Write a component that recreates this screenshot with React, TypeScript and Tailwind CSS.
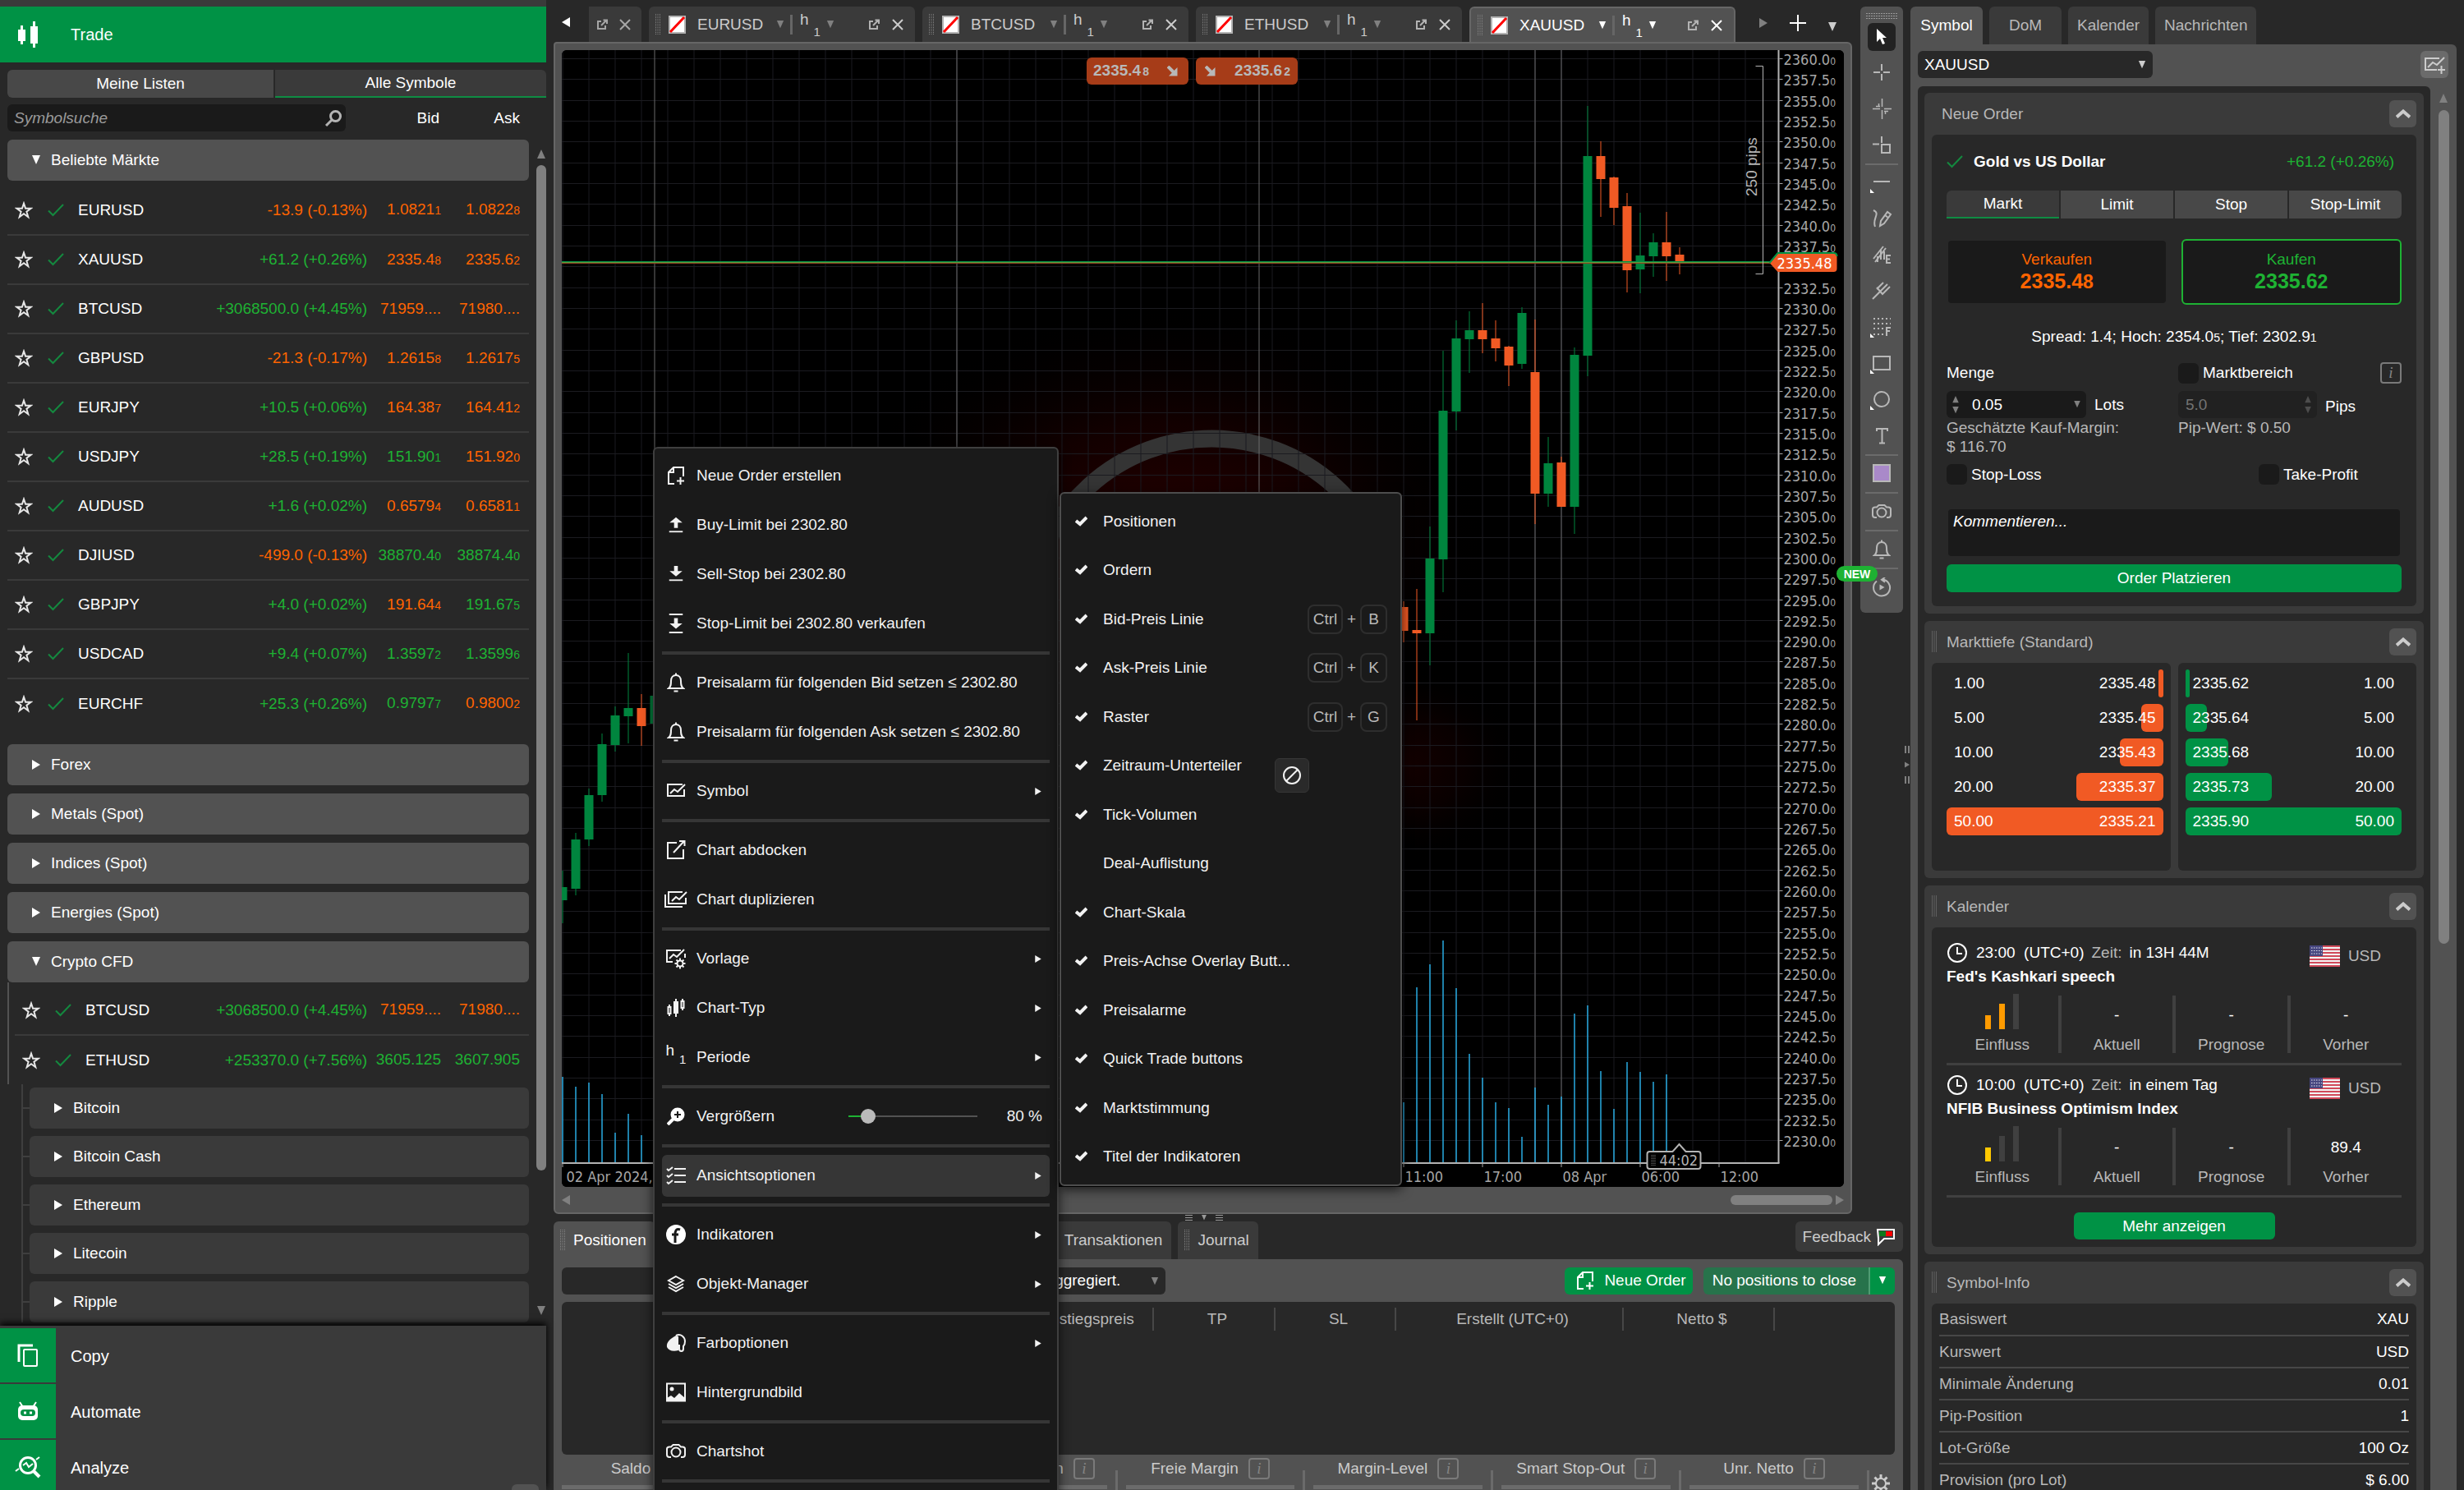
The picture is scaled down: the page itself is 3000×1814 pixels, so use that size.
import type { ReactNode } from "react";

type Tone = "up" | "down";

const toneClass = { up: "text-[#1eb233]", down: "text-[#ff6400]" };

/* ---------- small shared pieces ---------- */

interface SvgProps {
  w?: number;
  h?: number;
  box?: string;
  className?: string;
  stroke?: number;
  children: ReactNode;
}

function Svg({ w = 24, h = 24, box = "0 0 24 24", className = "", stroke = 2, children }: SvgProps) {
  return (
    <svg
      width={w}
      height={h}
      viewBox={box}
      fill="none"
      stroke="currentColor"
      strokeWidth={stroke}
      className={`shrink-0 ${className}`}
      aria-hidden="true"
    >
      {children}
    </svg>
  );
}

function Triangle({ dir, className = "" }: { dir: "up" | "down" | "left" | "right"; className?: string }) {
  const points = {
    up: "0,11 5,0 10,11",
    down: "0,0 10,0 5,11",
    left: "10,0 10,12 0,6",
    right: "0,0 10,6 0,12",
  };
  return (
    <svg width={10} height={12} viewBox="0 0 10 12" className={`shrink-0 fill-current ${className}`} aria-hidden="true">
      <polygon points={points[dir]} />
    </svg>
  );
}

function Grip({ className = "" }: { className?: string }) {
  return (
    <Svg w={6} h={26} box="0 0 6 26" stroke={1} className={`text-[#858585] ${className}`}>
      <path d="M0.5 0v26M3 0v26M5.5 0v26" strokeDasharray="1 1" />
    </Svg>
  );
}

function ThinCheck() {
  return (
    <Svg w={20} h={16} box="0 0 20 16" className="text-[#14893f]">
      <path d="M1 8.5l5.5 5.5L19 1" />
    </Svg>
  );
}

function Star() {
  return (
    <Svg w={22} h={22} box="0 0 22 22" stroke={2} className="text-[#e8e8e8]">
      <path d="M11 2.6l2.1 6.2h6.4l-5.1 3.9 1.9 6.5-5.3-3.9-5.3 3.9 1.9-6.5-5.1-3.9h6.4z" />
    </Svg>
  );
}

function DocPlus() {
  return (
    <Svg w={22} h={24} box="0 0 22 24">
      <path d="M9 22H2V8l6-6h12v11M8 2v6H2M12 18.500h9M16.500 14v9" />
    </Svg>
  );
}

function Camera() {
  return (
    <Svg w={24} h={22} box="0 0 24 22">
      <path d="M6 18H4c-2 0-3-1-3-3V8c0-1.500 1-2.500 3-2.500h2L8.500 3h7L18 5.500h2c2 0 3 1 3 2.500v7c0 2-1 3-3 3h-2" />
      <circle cx="12" cy="12" r="5.500" />
    </Svg>
  );
}

function Bell() {
  return (
    <Svg w={22} h={26} box="0 0 22 26">
      <path d="M2 20c3-2 3-5 3-9 0-4 2.500-7 6-7s6 3 6 7c0 4 0 7 3 9zM11 4V1.500M8.500 23.500h5" />
    </Svg>
  );
}

function ChartFrame() {
  return (
    <Svg w={26} h={22} box="0 0 26 22">
      <path d="M21 3H3v14h20V9M6 14l5-5 4 3 9-9" />
    </Svg>
  );
}

function Popout() {
  return (
    <Svg w={14} h={14} box="0 0 14 14">
      <path d="M6 3H2v9h9V8M6 8l6-6M8.500 1.500H13V6" />
    </Svg>
  );
}

function Cross() {
  return (
    <Svg w={14} h={14} box="0 0 14 14">
      <path d="M1 1l12 12M13 1L1 13" />
    </Svg>
  );
}

function InfoButton() {
  return (
    <button
      type="button"
      className="flex h-[26px] w-[26px] shrink-0 items-center justify-center rounded border-2 border-[#7a7a7a] font-['Liberation_Serif',serif] text-[19px] leading-[20px] text-[#858585] italic"
    >
      i
    </button>
  );
}

function Period({ className = "" }: { className?: string }) {
  return (
    <span className={`flex h-[32px] ${className}`}>
      <span className="leading-[20px]">h</span>
      <span className="ml-[6px] self-end text-[15px] leading-[14px]">1</span>
    </span>
  );
}

/* ---------- left sidebar ---------- */

interface Quote {
  name: string;
  change: string;
  tone: Tone;
  bid: [string, string, Tone];
  ask: [string, string, Tone];
}

const popular: Quote[] = [
  { name: "EURUSD", change: "-13.9 (-0.13%)", tone: "down", bid: ["1.0821", "1", "down"], ask: ["1.0822", "8", "down"] },
  { name: "XAUUSD", change: "+61.2 (+0.26%)", tone: "up", bid: ["2335.4", "8", "down"], ask: ["2335.6", "2", "down"] },
  { name: "BTCUSD", change: "+3068500.0 (+4.45%)", tone: "up", bid: ["71959....", "", "down"], ask: ["71980....", "", "down"] },
  { name: "GBPUSD", change: "-21.3 (-0.17%)", tone: "down", bid: ["1.2615", "8", "down"], ask: ["1.2617", "5", "down"] },
  { name: "EURJPY", change: "+10.5 (+0.06%)", tone: "up", bid: ["164.38", "7", "down"], ask: ["164.41", "2", "down"] },
  { name: "USDJPY", change: "+28.5 (+0.19%)", tone: "up", bid: ["151.90", "1", "up"], ask: ["151.92", "0", "down"] },
  { name: "AUDUSD", change: "+1.6 (+0.02%)", tone: "up", bid: ["0.6579", "4", "down"], ask: ["0.6581", "1", "down"] },
  { name: "DJIUSD", change: "-499.0 (-0.13%)", tone: "down", bid: ["38870.4", "0", "up"], ask: ["38874.4", "0", "up"] },
  { name: "GBPJPY", change: "+4.0 (+0.02%)", tone: "up", bid: ["191.64", "4", "down"], ask: ["191.67", "5", "up"] },
  { name: "USDCAD", change: "+9.4 (+0.07%)", tone: "up", bid: ["1.3597", "2", "up"], ask: ["1.3599", "6", "up"] },
  { name: "EURCHF", change: "+25.3 (+0.26%)", tone: "up", bid: ["0.9797", "7", "up"], ask: ["0.9800", "2", "down"] },
];

const crypto: Quote[] = [
  { name: "BTCUSD", change: "+3068500.0 (+4.45%)", tone: "up", bid: ["71959....", "", "down"], ask: ["71980....", "", "down"] },
  { name: "ETHUSD", change: "+253370.0 (+7.56%)", tone: "up", bid: ["3605.125", "", "up"], ask: ["3607.905", "", "up"] },
];

function Price({ value }: { value: [string, string, Tone] }) {
  return (
    <span className={toneClass[value[2]]}>
      {value[0]}
      <span className="text-[14px]">{value[1]}</span>
    </span>
  );
}

function QuoteTable({ quotes }: { quotes: Quote[] }) {
  return (
    <table className="w-full table-fixed border-collapse whitespace-nowrap">
      <colgroup>
        <col className="w-[190px]" />
        <col />
        <col className="w-[90px]" />
        <col className="w-[107px]" />
      </colgroup>
      <tbody>
        {quotes.map((q) => (
          <tr key={q.name} className="h-[60px] border-b-2 border-[#3a3a3a] last:border-b-0">
            <td className="p-0">
              <div className="flex items-center pl-[9px]">
                <button type="button" aria-label={`${q.name} merken`} className="mr-[18px]">
                  <Star />
                </button>
                <ThinCheck />
                <span className="ml-[17px]">{q.name}</span>
              </div>
            </td>
            <td className={`p-0 text-right ${toneClass[q.tone]}`}>{q.change}</td>
            <td className="p-0 text-right">
              <Price value={q.bid} />
            </td>
            <td className="p-0 pr-[11px] text-right">
              <Price value={q.ask} />
            </td>
          </tr>
        ))}
      </tbody>
    </table>
  );
}

function Group({ label, open = false, sub = false }: { label: string; open?: boolean; sub?: boolean }) {
  return (
    <button
      type="button"
      className={`flex h-[50px] min-w-0 items-center gap-[13px] rounded-md pl-[30px] text-left ${sub ? "flex-1 bg-[#3a3a3a]" : "w-full bg-[#525252]"}`}
    >
      <Triangle dir={open ? "down" : "right"} />
      {label}
    </button>
  );
}

function Sidebar() {
  return (
    <aside className="flex w-[665px] shrink-0 flex-col bg-[#282828]">
      <div className="h-2 shrink-0 bg-[#3a3a3a]" />
      <button type="button" className="flex h-[68px] shrink-0 items-center bg-[#009245] pl-[22px] text-xl">
        <svg width={26} height={32} viewBox="0 0 26 32" className="fill-white" aria-hidden="true">
          <path d="M0 10h9v14H0zM3 5h3v23H3zM15 6h9v21h-9zM18 0h3v32h-3z" />
        </svg>
        <span className="ml-[38px]">Trade</span>
      </button>

      <div className="mt-[9px] flex shrink-0 gap-[2px] pl-[9px]">
        <button type="button" className="h-[34px] w-[324px] rounded-l-md bg-[#484848]">
          Meine Listen
        </button>
        <button type="button" className="h-[34px] flex-1 rounded-tr-md border-b-2 border-[#0f8c43] bg-[#3a3a3a]">
          Alle Symbole
        </button>
      </div>

      <div className="mt-2 flex shrink-0 items-center pl-[9px]">
        <label className="flex h-[33px] w-[412px] items-center rounded-md bg-[#1a1a1a] pr-1 pl-2">
          <input
            type="text"
            aria-label="Symbolsuche"
            placeholder="Symbolsuche"
            className="min-w-0 flex-1 bg-transparent italic outline-none placeholder:text-[#9a9a9a]"
          />
          <Svg w={22} h={22} box="0 0 22 22" stroke={3} className="text-[#b3b3b3]">
            <circle cx="13.500" cy="8.500" r="6" />
            <path d="M9 13l-7 7" />
          </Svg>
        </label>
        <span className="w-[114px] text-right">Bid</span>
        <span className="w-[98px] text-right">Ask</span>
      </div>

      <div className="mt-[10px] flex min-h-0 flex-1 gap-[9px] overflow-hidden pl-[9px]">
        <div className="min-w-0 flex-1">
          <Group label="Beliebte Märkte" open />
          <div className="mt-[6px]">
            <QuoteTable quotes={popular} />
          </div>
          <div className="mt-5 flex flex-col gap-[10px]">
            <Group label="Forex" />
            <Group label="Metals (Spot)" />
            <Group label="Indices (Spot)" />
            <Group label="Energies (Spot)" />
            <Group label="Crypto CFD" open />
          </div>
          <div className="border-l-2 border-[#525252] pt-[4px] pl-[7px]">
            <QuoteTable quotes={crypto} />
          </div>
          <div className="ml-[17px] flex flex-col gap-[9px] border-l-2 border-[#3f3f3f] pt-[4px]">
            {["Bitcoin", "Bitcoin Cash", "Ethereum", "Litecoin", "Ripple"].map((name) => (
              <div key={name} className="flex items-center">
                <div className="h-[2px] w-2 shrink-0 bg-[#3f3f3f]" />
                <Group label={name} sub />
              </div>
            ))}
          </div>
        </div>
        <div className="flex w-3 flex-col items-center pt-3 pb-3 text-[#808080]">
          <Triangle dir="up" />
          <div className="mt-[7px] h-[1224px] w-3 rounded-full bg-[#808080]" />
          <Triangle dir="down" className="mt-auto" />
        </div>
      </div>

      <nav className="relative h-[200px] shrink-0 overflow-hidden bg-[#3a3a3a] pt-[3px] text-xl shadow-[0_-3px_8px_#000]">
        <SideLink label="Copy">
          <Svg w={26} h={28} box="0 0 26 28" stroke={3}>
            <path d="M19 2H2v20" />
            <rect x="8" y="7" width="16" height="20" rx="1" strokeWidth={2} />
          </Svg>
        </SideLink>
        <SideLink label="Automate">
          <svg width={26} height={24} viewBox="0 0 26 24" aria-hidden="true">
            <path d="M3 1l4 6M23 1l-4 6" stroke="#fff" strokeWidth={2} />
            <rect x="1" y="5" width="24" height="18" rx="5" fill="#fff" />
            <rect x="4" y="10" width="18" height="8" rx="4" fill="#009245" />
            <path d="M8 12.500h3v3H8zM15 12.500h3v3h-3z" fill="#fff" />
          </svg>
        </SideLink>
        <SideLink label="Analyze">
          <Svg w={32} h={28} box="0 0 32 28" stroke={3}>
            <circle cx="16" cy="12" r="9.500" />
            <path d="M22 18l8 8" strokeWidth={4} />
            <path d="M1 19l4-3M10 12l4-3 3 5 5-4M26 5l4-3" strokeWidth={2} />
          </Svg>
        </SideLink>
        <div className="absolute right-[9px] bottom-0 h-[7px] w-[33px] rounded-t-md bg-[#525252]" />
      </nav>
    </aside>
  );
}

function SideLink({ label, children }: { label: string; children: ReactNode }) {
  return (
    <a href="#" className="mb-[2px] flex h-[66px] items-center">
      <span className="flex h-full w-[68px] items-center justify-center bg-[#009245]">{children}</span>
      <span className="ml-[18px] pt-[2px]">{label}</span>
    </a>
  );
}

/* ---------- chart ---------- */

// [slot, high, open/close top, open/close bottom, low, tone]
const candles: [number, number, number, number, number, Tone][] = [
  [0, 1060, 1080, 1096, 1124, "up"],
  [1, 1014, 1022, 1082, 1090, "up"],
  [2, 960, 968, 1022, 1030, "up"],
  [3, 893, 906, 968, 976, "up"],
  [4, 860, 871, 907, 915, "up"],
  [5, 795, 862, 872, 905, "up"],
  [6, 845, 862, 884, 908, "down"],
  [7, 840, 847, 881, 890, "up"],
  [64, 732, 739, 768, 782, "down"],
  [65, 717, 767, 771, 877, "down"],
  [66, 641, 680, 771, 810, "up"],
  [67, 427, 500, 681, 721, "up"],
  [68, 390, 412, 501, 524, "up"],
  [69, 379, 402, 413, 454, "up"],
  [70, 369, 402, 413, 430, "down"],
  [71, 390, 412, 424, 440, "down"],
  [72, 421, 422, 445, 470, "down"],
  [73, 374, 381, 443, 449, "up"],
  [74, 389, 453, 601, 638, "down"],
  [75, 532, 564, 601, 617, "up"],
  [76, 556, 563, 617, 617, "down"],
  [77, 423, 432, 617, 650, "up"],
  [78, 129, 190, 433, 458, "up"],
  [79, 172, 190, 218, 264, "down"],
  [80, 215, 216, 253, 274, "down"],
  [81, 235, 251, 329, 356, "down"],
  [82, 259, 311, 328, 357, "up"],
  [83, 284, 295, 312, 337, "up"],
  [84, 258, 295, 312, 342, "down"],
  [85, 301, 310, 319, 334, "down"],
];

// [slot, top of the volume bar]
const volumes: [number, number][] = [
  [0, 1311], [1, 1323], [2, 1318], [3, 1332], [4, 1379], [5, 1356], [6, 1382],
  [64, 1342], [65, 1202], [66, 1174], [67, 1145], [68, 1203], [69, 1283], [70, 1312],
  [71, 1342], [72, 1349], [73, 1384], [74, 1324], [75, 1345], [76, 1335], [77, 1234],
  [78, 1224], [79, 1304], [80, 1350], [81, 1293], [82, 1305], [83, 1317], [84, 1308],
];

const timeLabels: [number, string][] = [
  [0, "02 Apr 2024,"],
  [64, "11:00"],
  [70, "17:00"],
  [76, "08 Apr"],
  [82, "06:00"],
  [88, "12:00"],
];

const slotX = (slot: number) => 686 + slot * 16;
const baseline = 1416;
const prices = Array.from({ length: 53 }, (_, i) => ({
  y: Math.round(71 + (i * 1317) / 52),
  label: (2360 - i * 2.5).toFixed(1),
}));
// the level behind the current price tag gets no label of its own
const priceLabels = prices.filter((p) => p.label !== "2335.0");

function PriceChart() {
  return (
    <svg
      viewBox="685 61 1562 1384"
      preserveAspectRatio="xMidYMid slice"
      className="h-full w-full font-['DejaVu_Sans_Condensed','Noto_Sans',sans-serif] text-[18px]"
      role="img"
      aria-label="XAUUSD h1"
    >
      <defs>
        <radialGradient id="glow">
          <stop offset="0" stopColor="#260000" />
          <stop offset="0.5" stopColor="#120000" />
          <stop offset="1" stopColor="#000" stopOpacity="0" />
        </radialGradient>
      </defs>
      <rect x="685" y="61" width="1562" height="1384" fill="#000" />
      <ellipse cx="1420" cy="660" rx="400" ry="290" fill="url(#glow)" />
      <ellipse cx="1710" cy="930" rx="150" ry="120" fill="url(#glow)" opacity="0.500" />
      <path d="M1256 735a222 222 0 0 1 442 0" fill="none" stroke="#343434" strokeWidth="21" />

      <g stroke="#1b1b20">
        {Array.from({ length: 46 }, (_, i) => (
          <path key={i} d={`M${slotX(i * 2) + 0.5} 61V${baseline}`} />
        ))}
        {prices.map((p) => (
          <path key={p.label} d={`M685 ${p.y + 0.5}H2167`} />
        ))}
      </g>
      <g stroke="#6b6b6b">
        {[7, 30, 53, 74, 76].map((slot) => (
          <path key={slot} d={`M${slotX(slot) + 0.5} 61V${baseline}`} />
        ))}
      </g>

      {volumes.map(([slot, top]) => (
        <path key={slot} d={`M${slotX(slot) + 0.5} ${top}V${baseline}`} stroke="#29abe2" strokeWidth="1.500" />
      ))}
      {candles.map(([slot, high, top, bottom, low, tone]) => {
        const color = tone === "up" ? "#00853e" : "#f15a24";
        return (
          <g key={slot} fill={color}>
            <rect x={slotX(slot)} y={high} width="1" height={low - high} />
            <rect x={slotX(slot) - 5} y={top} width="11" height={bottom - top} />
          </g>
        );
      })}

      <path d="M685 318.500H2160" stroke="#009245" />
      <path d="M685 319.500H2160" stroke="#5c9a3c" />
      <path d="M685 320.500H2160" stroke="#8f4220" />

      <path d="M2139 80.500h9v253h-9" fill="none" stroke="#b3b3b3" />
      <text
        transform="translate(2140 239) rotate(-90)"
        className="fill-[#b3b3b3] font-['Liberation_Sans',Arial,sans-serif] text-[19px]"
      >
        250 pips
      </text>

      <path d={`M2167 61V${baseline}`} stroke="#b3b3b3" strokeWidth="2" />
      <path d={`M685 ${baseline}H2168`} stroke="#b3b3b3" strokeWidth="2" />
      <g fill="#a6a6a6">
        {priceLabels.map((p) => (
          <text key={p.label} x="2173" y={p.y + 8}>
            {p.label}
            <tspan className="text-[12px]">0</tspan>
          </text>
        ))}
        {prices.map((p) => (
          <rect key={p.label} x="2168" y={p.y} width="4" height="1" />
        ))}
        {timeLabels.map(([slot, label]) => (
          <g key={label}>
            <rect x={slotX(slot)} y={baseline} width="1" height="5" />
            <text x={slotX(slot) + (slot ? 2 : 5)} y="1439">
              {label}
            </text>
          </g>
        ))}
      </g>

      <path d="M2156 320l10-12h68q4 0 4 4v15q0 4-4 4h-68z" fill="#f15a24" />
      <path d="M2156 320l10-12h68q4 0 4 4" fill="none" stroke="#009245" strokeWidth="2" />
      <text x="2165" y="327" fill="#fff">
        2335.48
      </text>

      <path
        d="M2010 1402h28l8-9 8 9h15q3 0 3 3v15q0 3-3 3h-59q-3 0-3-3v-15q0-3 3-3z"
        fill="#000"
        stroke="#b3b3b3"
        strokeWidth="2"
      />
      <path d="M2012.500 1406v14M2014.500 1406v14M2016.500 1406v14" stroke="#808080" strokeDasharray="1 1" />
      <text x="2022" y="1419" fill="#b3b3b3">
        44:02
      </text>
    </svg>
  );
}

function ChartTab({ symbol, active = false }: { symbol: string; active?: boolean }) {
  return (
    <div
      className={`flex h-full w-[324px] shrink-0 items-center rounded-t-md pr-[14px] pl-2 ${
        active ? "border-x-2 border-t-2 border-[#666] bg-[#525252] text-white" : "bg-[#3a3a3a] text-[#ccc]"
      }`}
    >
      <Grip />
      <svg width={21} height={22} viewBox="0 0 21 22" className="ml-[10px]" aria-hidden="true">
        <rect x="1" y="1" width="19" height="20" fill="#fff" stroke="#b3b3b3" strokeWidth={2} />
        <path d="M2 20L19 2" stroke="#f00" strokeWidth={3} />
      </svg>
      <button type="button" className="ml-[14px] flex items-center">
        <span className="w-[96px] text-left">{symbol}</span>
        <Triangle dir="down" className={active ? "h-[10px]" : "h-[10px] text-[#808080]"} />
      </button>
      <div className="mr-[9px] ml-[7px] h-[24px] w-[3px] bg-[#666]" />
      <button type="button" className="flex items-center">
        <Period className="w-[32px]" />
        <Triangle dir="down" className={active ? "h-[10px]" : "h-[10px] text-[#808080]"} />
      </button>
      <button type="button" aria-label="Abdocken" className="mr-[15px] ml-auto text-[#b3b3b3]">
        <Popout />
      </button>
      <button type="button" aria-label="Schließen">
        <Cross />
      </button>
    </div>
  );
}

function QuickButton({ side, value, digit }: { side: "sell" | "buy"; value: string; digit: string }) {
  return (
    <button
      type="button"
      className={`flex h-[33px] w-[124px] items-center justify-between rounded-md bg-[#a63c18] font-bold text-[#b8b8b8] ${
        side === "buy" ? "flex-row-reverse pr-[9px] pl-[11px]" : "pr-[13px] pl-2"
      }`}
    >
      <span>
        {value}
        <span className="ml-[2px] text-[14px]">{digit}</span>
      </span>
      <Svg w={13} h={13} box="0 0 13 13" stroke={4}>
        <path d="M1 1l8 8" />
        <path d="M12.500 2v10.500H2z" fill="currentColor" stroke="none" />
      </Svg>
    </button>
  );
}

function ChartArea() {
  return (
    <div className="flex min-w-0 flex-1 flex-col pt-2">
      <div className="flex h-[43px] shrink-0 gap-[9px] pl-[10px]">
        <div className="flex w-[97px] shrink-0 items-stretch justify-between">
          <button type="button" aria-label="Zurück">
            <Triangle dir="left" className="mb-[6px]" />
          </button>
          <div className="flex w-[64px] items-center justify-end gap-[14px] rounded-tr-md bg-[#3a3a3a] pr-[13px] text-[#a6a6a6]">
            <Popout />
            <Cross />
          </div>
        </div>
        <ChartTab symbol="EURUSD" />
        <ChartTab symbol="BTCUSD" />
        <ChartTab symbol="ETHUSD" />
        <ChartTab symbol="XAUUSD" active />
        <div className="ml-[20px] flex shrink-0 items-center gap-[27px] pb-1">
          <Triangle dir="right" className="text-[#808080]" />
          <Svg w={20} h={20} box="0 0 20 20">
            <path d="M10 0v20M0 10h20" />
          </Svg>
          <Triangle dir="down" className="mt-[10px] text-[#ccc]" />
        </div>
      </div>
      <div className="flex min-h-0 flex-1 flex-col rounded-md rounded-tl-sm border-2 border-[#666] bg-[#525252] px-2 pt-2">
        <div className="relative min-h-0 flex-1 overflow-hidden rounded-md bg-black">
          <PriceChart />
          <div className="absolute inset-x-0 top-[9px] flex justify-center gap-[9px] pr-[26px]">
            <QuickButton side="sell" value="2335.4" digit="8" />
            <QuickButton side="buy" value="2335.6" digit="2" />
          </div>
        </div>
        <div className="flex h-[31px] shrink-0 items-center text-[#808080]">
          <Triangle dir="left" />
          <div className="mr-1 ml-auto h-3 w-[124px] rounded-full bg-[#808080]" />
          <Triangle dir="right" />
        </div>
      </div>
    </div>
  );
}

/* ---------- drawing toolbar ---------- */

function Corner() {
  return <path d="M0 21l5 5H0z" fill="#fff" stroke="none" />;
}

const tools: { name: string; icon: ReactNode; line?: boolean }[] = [
  { name: "Fadenkreuz", icon: <path d="M14 3v8M14 15v8M4 13h8M16 13h8" /> },
  {
    name: "Magnet",
    icon: <path d="M14.500 1v10M14.500 15v11M3 13.500h9M17 13.500h9M10.500 7v4M18.500 16v4M7 10.500h5M17 16.500h5" strokeWidth={1.5} />,
  },
  { name: "Messen", icon: <path d="M14 3v8M3 12.500h8M14 13h10v10H14z" />, line: true },
  { name: "Linie", icon: <><path d="M4 12h20" /><Corner /></> },
  { name: "Freihand", icon: <path d="M4 3c9 4-2 10 2 20M12 22l1-6 8-11 4 3-8 11zM18 9l4 3" /> },
  { name: "Elliott", icon: <><path d="M4 18L16 3M6 22l13-17M13 7v12M17 9v10M9 15v7" /><path d="M20 14h5M20 18.500h4M20 23h5M20 13v11" /></> },
  { name: "Gabel", icon: <path d="M3 23l9-9M8 9l7 8 9-9M8 11l8-8M12 14l9-9" /> },
  {
    name: "Fibonacci",
    icon: (
      <>
        <path d="M4 3h21M4 9h21M4 15h12M4 22h12" strokeDasharray="2 3" />
        <path d="M20 24V14h5M20 18h4" />
        <Corner />
      </>
    ),
  },
  { name: "Rechteck", icon: <><rect x="4" y="5" width="20" height="16" /><Corner /></> },
  { name: "Ellipse", icon: <><circle cx="14" cy="13" r="9" /><Corner /></> },
  { name: "Text", icon: <path d="M8 8V5h13v3M14.500 5v18M11 22.500h7" />, line: true },
  { name: "Farbe", icon: <rect x="4" y="3" width="20" height="20" fill="#a989c9" />, line: true },
];

function ToolBar() {
  return (
    <div className="mt-2 flex w-[52px] shrink-0 flex-col items-center self-start rounded-md bg-[#525252] pb-[9px] text-[#b8b8b8]">
      <Svg w={39} h={15} box="0 0 39 15" stroke={1} className="text-[#999]">
        <path d="M0 8.500h39M0 11.500h39M0 14.500h39" strokeDasharray="2 1" />
      </Svg>
      <button type="button" aria-label="Zeiger" className="my-[5px] flex h-[34px] w-[34px] items-center justify-center rounded-md bg-[#222]">
        <svg width={14} height={20} viewBox="0 0 14 20" className="fill-white" aria-hidden="true">
          <path d="M1 0v16l4-4 3 7 3-1-3-7h5z" />
        </svg>
      </button>
      {tools.map((tool) => (
        <div key={tool.name} className={`flex w-[40px] justify-center ${tool.line ? "border-b-2 border-[#6b6b6b]" : ""}`}>
          <button type="button" aria-label={tool.name} className="flex h-[44px] items-center">
            <Svg w={28} h={28} box="0 0 28 28">
              {tool.icon}
            </Svg>
          </button>
        </div>
      ))}
      <button type="button" aria-label="Chartshot" className="flex h-[46px] w-[40px] items-center justify-center border-b-2 border-[#6b6b6b]">
        <Camera />
      </button>
      <button type="button" aria-label="Alarm" className="flex h-[46px] w-[40px] items-center justify-center border-b-2 border-[#6b6b6b]">
        <Bell />
      </button>
      <button type="button" aria-label="Replay" className="relative flex h-[44px] w-full items-center justify-center">
        <Svg w={24} h={24} box="0 0 24 24">
          <path d="M6 4.500A10 10 0 1 0 13 2.500M16 0l-4 2.700 4 3" />
          <path d="M9.500 8.500v7l6-3.500z" fill="currentColor" stroke="none" />
        </Svg>
        <span className="absolute -top-1 -left-[29px] flex h-[19px] w-[50px] items-center justify-center rounded-full bg-[#1eb233] text-[14px] leading-none font-bold text-white">
          NEW
        </span>
      </button>
    </div>
  );
}

/* ---------- positions ---------- */

const accountStats = ["Saldo", "", "Benutzte Margin", "Freie Margin", "Margin-Level", "Smart Stop-Out", "Unr. Netto"];

function PanelTab({ label, active = false }: { label: string; active?: boolean }) {
  return (
    <button
      type="button"
      className={`flex h-full items-center gap-[10px] rounded-t-md pr-[11px] pl-2 ${active ? "bg-[#525252] text-white" : "bg-[#3a3a3a] text-[#ccc]"}`}
    >
      <Grip />
      {label}
    </button>
  );
}

function Positions() {
  const head = "p-0 font-normal";
  const cell = "flex h-7 items-center justify-center border-r-2 border-[#474747] pl-2";
  return (
    <section className="shrink-0">
      <div className="flex h-[9px] items-center justify-center gap-[9px] pr-[60px] text-[#999]">
        <Svg w={9} h={7} box="0 0 9 7" stroke={1}>
          <path d="M0 .5h9M0 3.500h9M0 6.500h9" />
        </Svg>
        <Triangle dir="down" className="h-[7px]" />
        <Svg w={9} h={7} box="0 0 9 7" stroke={1}>
          <path d="M0 .5h9M0 3.500h9M0 6.500h9" />
        </Svg>
      </div>
      <div className="flex h-[46px] gap-2">
        <PanelTab label="Positionen" active />
        <div className="w-[458px]" />
        <PanelTab label="Transaktionen" />
        <PanelTab label="Journal" />
        <a href="#" className="ml-auto flex h-[37px] items-center gap-[6px] rounded-md bg-[#3a3a3a] px-[9px] text-[#ccc]">
          Feedback
          <svg width={24} height={22} viewBox="0 0 24 22" aria-hidden="true">
            <path d="M2 2h20v11H10l-7 7V13z" fill="#3a3a3a" stroke="#fff" strokeWidth={2} />
            <path d="M4 4h8v6H4z" fill="#0f7a1c" />
            <path d="M12 4h8v6h-8z" fill="#f00" />
          </svg>
        </a>
      </div>
      <div className="rounded-tr-md bg-[#525252] px-[10px]">
        <div className="flex h-[52px] items-center">
          <div className="relative w-[735px]">
            <select aria-label="Ansicht" className="h-[33px] w-full appearance-none rounded-md bg-[#282828] pl-[541px]">
              <option>Nicht aggregiert.</option>
            </select>
            <Triangle dir="down" className="pointer-events-none absolute top-[12px] right-2 h-[10px] text-[#808080]" />
          </div>
          <button type="button" className="ml-auto flex h-[33px] items-center gap-3 rounded-md bg-[#009245] pr-2 pl-[14px]">
            <DocPlus />
            Neue Order
          </button>
          <button type="button" className="ml-[13px] h-[33px] rounded-l-md bg-[#27734b] pr-[15px] pl-[11px]">
            No positions to close
          </button>
          <button type="button" aria-label="Optionen" className="flex h-[33px] w-[32px] items-center justify-center rounded-r-md border-l-2 border-[#4f9c72] bg-[#009245]">
            <Triangle dir="down" className="h-[10px]" />
          </button>
        </div>
        <div className="h-[186px] rounded-md bg-[#282828] pt-[7px] text-[#b8b8b8]">
          <table className="w-full table-fixed border-collapse">
            <colgroup>
              <col />
              <col className="w-[173px]" />
              <col className="w-[148px]" />
              <col className="w-[147px]" />
              <col className="w-[277px]" />
              <col className="w-[184px]" />
              <col className="w-[146px]" />
            </colgroup>
            <thead>
              <tr>
                <td />
                {["Einstiegspreis", "TP", "SL", "Erstellt (UTC+0)", "Netto $"].map((title) => (
                  <th key={title} scope="col" className={head}>
                    <div className={cell}>{title}</div>
                  </th>
                ))}
                <td />
              </tr>
            </thead>
          </table>
        </div>
      </div>
      <div className="flex h-[43px] overflow-hidden bg-[#525252] text-[#ccc]">
        {accountStats.map((label) => (
          <div key={label} className="flex flex-1">
            <div className="flex flex-1 flex-col items-center px-[10px] pt-1">
              <div className="flex items-center gap-3">
                {label}
                <InfoButton />
              </div>
              <div className="mt-[7px] h-[5px] w-full bg-[#6b6b6b]" />
            </div>
            <div className="h-[24px] w-[3px] self-end bg-[#6b6b6b]" />
          </div>
        ))}
        <button type="button" aria-label="Einstellungen" className="flex w-[41px] justify-center self-start pt-[24px] pr-[13px]">
          <Svg w={22} h={22} box="0 0 22 22">
            <circle cx="11" cy="11" r="6" />
            <path d="M11 0v5M11 17v5M0 11h5M17 11h5M3.500 3.500l3 3M15.500 15.500l3 3M3.500 18.500l3-3M15.500 6.500l3-3" strokeWidth={3} />
          </Svg>
        </button>
      </div>
    </section>
  );
}

/* ---------- right panel ---------- */

interface CardProps {
  title: string;
  grip?: boolean;
  children: ReactNode;
}

function Card({ title, grip = true, children }: CardProps) {
  return (
    <section className="shrink-0 rounded-md bg-[#3a3a3a] p-[9px]">
      <header className="mb-[9px] flex h-[33px] items-center">
        {grip && <Grip className="h-[33px]" />}
        <h2 className="ml-3 text-[#b8b8b8]">{title}</h2>
        <button type="button" aria-label={`${title} einklappen`} className="ml-auto flex h-[33px] w-[33px] items-center justify-center rounded-md bg-[#525252] text-[#ccc]">
          <Svg w={18} h={11} box="0 0 18 11" stroke={4}>
            <path d="M1 9.500l8-7 8 7" />
          </Svg>
        </button>
      </header>
      {children}
    </section>
  );
}

const checkBox = "h-[25px] w-[25px] appearance-none rounded-md bg-[#1a1a1a] checked:bg-[#009245]";

function Spinner() {
  return (
    <div className="flex flex-col gap-1">
      <Triangle dir="up" className="h-[9px]" />
      <Triangle dir="down" className="h-[9px]" />
    </div>
  );
}

function OrderCard() {
  const tab = "h-[34px] flex-1 bg-[#484848]";
  return (
    <Card title="Neue Order" grip={false}>
      <form className="rounded-md bg-[#282828] px-[18px] pt-[22px] pb-[17px]">
        <div className="flex h-[22px] items-center pr-[9px]">
          <ThinCheck />
          <span className="ml-[13px] font-bold">Gold vs US Dollar</span>
          <span className="ml-auto text-[#1eb233]">+61.2 (+0.26%)</span>
        </div>
        <div className="mt-6 flex gap-[2px]">
          <button type="button" className="h-[34px] flex-1 rounded-tl-md border-b-2 border-[#0f8c43] bg-[#3a3a3a]">
            Markt
          </button>
          <button type="button" className={tab}>Limit</button>
          <button type="button" className={tab}>Stop</button>
          <button type="button" className={`${tab} rounded-r-md`}>Stop-Limit</button>
        </div>
        <div className="mt-[25px] flex gap-[17px]">
          <button type="button" className="h-[80px] flex-1 rounded-md border-2 border-transparent bg-[#1a1a1a] bg-clip-padding text-[#ff6400]">
            <span className="block">Verkaufen</span>
            <span className="block text-[25px] leading-[30px] font-bold">
              2335.4<span className="text-[23px]">8</span>
            </span>
          </button>
          <button type="button" className="h-[80px] flex-1 rounded-md border-2 border-[#1eb233] bg-[#1a1a1a] text-[#1eb233]">
            <span className="block">Kaufen</span>
            <span className="block text-[25px] leading-[30px] font-bold">
              2335.6<span className="text-[23px]">2</span>
            </span>
          </button>
        </div>
        <p className="mt-7 h-[22px] text-center">
          Spread: 1.4; Hoch: 2354.0<span className="text-[14px]">5</span>; Tief: 2302.9
          <span className="text-[14px]">1</span>
        </p>

        <div className="mt-5 grid grid-cols-[282px_1fr]">
          <label htmlFor="volume" className="leading-[26px]">
            Menge
          </label>
          <div className="flex h-[26px] items-center">
            <label className="flex items-center gap-[5px]">
              <input type="checkbox" className={checkBox} />
              Marktbereich
            </label>
            <div className="ml-auto flex">
              <InfoButton />
            </div>
          </div>

          <div className="mt-[9px] flex items-center">
            <div className="flex h-[33px] w-[170px] items-center rounded-md bg-[#1a1a1a] px-[6px] text-[#808080]">
              <Spinner />
              <input id="volume" type="text" defaultValue="0.05" className="ml-[15px] min-w-0 flex-1 bg-transparent text-white outline-none" />
              <Triangle dir="down" className="h-[9px]" />
            </div>
            <span className="ml-[10px]">Lots</span>
          </div>
          <div className="mt-[9px] flex items-center">
            <div className="flex h-[33px] w-[169px] items-center rounded-md bg-[#212121] px-[6px] text-[#4d4d4d]">
              <input aria-label="Marktbereich in Pips" type="text" disabled defaultValue="5.0" className="ml-[3px] min-w-0 flex-1 bg-transparent text-[#737373]" />
              <Spinner />
            </div>
            <span className="ml-[10px] pt-[5px]">Pips</span>
          </div>

          <p className="w-[215px] leading-[23px] text-[#b8b8b8]">Geschätzte Kauf-Margin: $ 116.70</p>
          <p className="leading-[23px] text-[#b8b8b8]">Pip-Wert: $ 0.50</p>

          <label className="mt-[10px] flex items-center gap-[5px]">
            <input type="checkbox" className={checkBox} />
            Stop-Loss
          </label>
          <label className="mt-[10px] flex items-center gap-[5px] pl-[98px]">
            <input type="checkbox" className={checkBox} />
            Take-Profit
          </label>
        </div>

        <div className="mt-[30px] flex px-[2px]">
          <textarea
            aria-label="Kommentar"
            placeholder="Kommentieren..."
            className="h-[57px] w-full resize-none rounded-sm bg-[#1a1a1a] px-[6px] py-1 italic outline-none placeholder:text-white"
          />
        </div>
        <button type="submit" className="mt-[10px] block h-[34px] w-full rounded-md bg-[#009245]">
          Order Platzieren
        </button>
      </form>
    </Card>
  );
}

const depth = [
  { volume: "1.00", bid: "2335.48", ask: "2335.62", share: 2 },
  { volume: "5.00", bid: "2335.45", ask: "2335.64", share: 10 },
  { volume: "10.00", bid: "2335.43", ask: "2335.68", share: 20 },
  { volume: "20.00", bid: "2335.37", ask: "2335.73", share: 40 },
  { volume: "50.00", bid: "2335.21", ask: "2335.90", share: 100 },
];

function DepthTable({ side }: { side: "bid" | "ask" }) {
  const isBid = side === "bid";
  return (
    <div className={`h-[253px] flex-1 rounded-md bg-[#282828] pt-1 ${isBid ? "pr-[9px] pl-[18px]" : "pr-[18px] pl-[9px]"}`}>
      <table className="w-full border-collapse">
        <tbody>
          {depth.map((row) => (
            <tr key={row.volume} className="relative h-[42px]">
              <td className="p-0 pl-[9px]">
                <span
                  className={`absolute inset-y-1 rounded-md ${isBid ? "right-0 bg-[#f15a24]" : "left-0 bg-[#009245]"}`}
                  style={{ width: `${row.share}%` }}
                />
                <span className="relative">{isBid ? row.volume : row.ask}</span>
              </td>
              <td className="p-0 pr-[9px] text-right">
                <span className="relative">{isBid ? row.bid : row.volume}</span>
              </td>
            </tr>
          ))}
        </tbody>
      </table>
    </div>
  );
}

function Flag() {
  return (
    <svg width={37} height={26} viewBox="0 0 37 26" aria-hidden="true">
      <rect width="37" height="26" fill="#f2f2f2" />
      <path d="M0 1h37M0 5h37M0 9h37M0 13h37M0 17h37M0 21h37M0 25h37" stroke="#d14a5a" strokeWidth={2} />
      <rect width="16" height="13" fill="#46467f" />
      <path d="M2 3h13M2 6.500h13M2 10h13" stroke="#e6e6f0" strokeDasharray="1.500 1.500" />
    </svg>
  );
}

interface CalendarEvent {
  time: string;
  due: string;
  title: string;
  bars: string[];
  values: string[];
}

const events: CalendarEvent[] = [
  {
    time: "23:00",
    due: "in 13H 44M",
    title: "Fed's Kashkari speech",
    bars: ["bg-[#ff9b00]", "bg-[#ff9b00]", "bg-[#404040]"],
    values: ["-", "-", "-"],
  },
  {
    time: "10:00",
    due: "in einem Tag",
    title: "NFIB Business Optimism Index",
    bars: ["bg-[#ffc800]", "bg-[#404040]", "bg-[#404040]"],
    values: ["-", "-", "89.4"],
  },
];

function EventRow({ event, first }: { event: CalendarEvent; first: boolean }) {
  const heights = ["h-[17px]", "h-[31px]", "h-[43px]"];
  return (
    <article className={`border-b-[3px] border-[#404040] ${first ? "pt-[19px]" : "pt-3"}`}>
      <div className="flex h-6 items-center whitespace-pre">
        <Svg w={26} h={26} box="0 0 26 26">
          <circle cx="13" cy="13" r="11" />
          <path d="M13 6v8h6" />
        </Svg>
        <span className="ml-[10px]">{`${event.time}  (UTC+0)`}</span>
        <span className="ml-[9px] text-[#b8b8b8]">Zeit:</span>
        <span className="ml-[9px]">{event.due}</span>
        <span className="mt-2 mr-[25px] ml-auto flex items-center gap-[10px] text-[#b8b8b8]">
          <Flag />
          USD
        </span>
      </div>
      <h3 className="mt-[6px] font-bold">{event.title}</h3>
      <div className="mt-3 mb-3 flex h-[70px] divide-x-4 divide-[#404040] text-center">
        <div className="flex flex-1 flex-col items-center">
          <div className="flex h-[41px] items-end gap-[10px]">
            {event.bars.map((color, i) => (
              <div key={i} className={`w-[7px] ${heights[i]} ${color}`} />
            ))}
          </div>
          <div className="mt-2 text-[#b8b8b8]">Einfluss</div>
        </div>
        {["Aktuell", "Prognose", "Vorher"].map((label, i) => (
          <div key={label} className="flex-1">
            <div className="h-[41px] pt-[13px]">{event.values[i]}</div>
            <div className="mt-2 text-[#b8b8b8]">{label}</div>
          </div>
        ))}
      </div>
    </article>
  );
}

const symbolInfo = [
  ["Basiswert", "XAU"],
  ["Kurswert", "USD"],
  ["Minimale Änderung", "0.01"],
  ["Pip-Position", "1"],
  ["Lot-Größe", "100 Oz"],
  ["Provision (pro Lot)", "$ 6.00"],
];

function RightPanel() {
  const tab = "h-full min-w-[88px] rounded-t-md bg-[#3a3a3a] px-[11px] text-[#b8b8b8]";
  return (
    <aside className="mr-[9px] flex w-[665px] shrink-0 flex-col pt-2">
      <div className="flex h-[46px] shrink-0 gap-2">
        <button type="button" className="h-full min-w-[88px] rounded-t-md bg-[#525252]">
          Symbol
        </button>
        <button type="button" className={tab}>DoM</button>
        <button type="button" className={tab}>Kalender</button>
        <button type="button" className={tab}>Nachrichten</button>
      </div>
      <div className="flex min-h-0 flex-1 flex-col rounded-tr-md bg-[#525252] pl-[9px]">
        <div className="flex h-[51px] shrink-0 items-start justify-between pt-2 pr-[10px]">
          <div className="relative w-[286px]">
            <select aria-label="Symbol" className="h-[33px] w-full appearance-none rounded-md bg-[#282828] px-2">
              <option>XAUUSD</option>
            </select>
            <Triangle dir="down" className="pointer-events-none absolute top-[12px] right-2 h-[10px] text-[#ccc]" />
          </div>
          <button type="button" aria-label="Neuer Chart" className="flex h-[33px] w-[34px] items-center justify-center rounded-md bg-[#6b6b6b] text-[#ccc]">
            <Svg w={28} h={24} box="0 0 28 24">
              <path d="M20 4H3v14h14M6 15l6-6 5 3 9-9M18 18h9M22.500 13v10" />
            </Svg>
          </button>
        </div>
        <div className="flex min-h-0 flex-1 overflow-hidden">
          <div className="flex min-w-0 flex-1 flex-col gap-[9px] rounded-t-md bg-[#282828] p-2">
            <OrderCard />
            <Card title="Markttiefe (Standard)">
              <div className="flex gap-[9px]">
                <DepthTable side="bid" />
                <DepthTable side="ask" />
              </div>
            </Card>
            <Card title="Kalender">
              <div className="rounded-md bg-[#282828] px-[18px] pb-[9px]">
                {events.map((event, i) => (
                  <EventRow key={event.title} event={event} first={i === 0} />
                ))}
                <div className="mt-[18px] flex justify-center">
                  <button type="button" className="h-[33px] w-[245px] rounded-md bg-[#009245]">
                    Mehr anzeigen
                  </button>
                </div>
              </div>
            </Card>
            <Card title="Symbol-Info">
              <div className="rounded-md bg-[#282828] px-[9px]">
                <table className="w-full border-collapse">
                  <tbody>
                    {symbolInfo.map(([label, value]) => (
                      <tr key={label} className="h-[39px] border-b-2 border-[#474747]">
                        <th scope="row" className="p-0 text-left font-normal text-[#b8b8b8]">
                          {label}
                        </th>
                        <td className="p-0 text-right">{value}</td>
                      </tr>
                    ))}
                  </tbody>
                </table>
              </div>
            </Card>
          </div>
          <div className="flex w-8 shrink-0 flex-col items-center pt-[9px] text-[#808080]">
            <Triangle dir="up" />
            <div className="mt-2 h-[1015px] w-[13px] rounded-full bg-[#808080]" />
          </div>
        </div>
      </div>
    </aside>
  );
}

/* ---------- context menus ---------- */

interface MenuItem {
  label: string;
  icon: ReactNode;
  more?: boolean;
  selected?: boolean;
}

const arrowDown = <path d="M9.500 1h5v7h6L12 15 3.500 8h6z" fill="currentColor" stroke="none" />;

const menuGroups: MenuItem[][] = [
  [
    { label: "Neue Order erstellen", icon: <DocPlus /> },
    {
      label: "Buy-Limit bei 2302.80",
      icon: (
        <Svg w={22} h={22}>
          <path d="M9.500 16h5V9h6L12 2 3.500 9h6z" fill="currentColor" stroke="none" />
          <path d="M3 21h18" />
        </Svg>
      ),
    },
    {
      label: "Sell-Stop bei 2302.80",
      icon: (
        <Svg w={22} h={22}>
          {arrowDown}
          <path d="M3 20h18" />
        </Svg>
      ),
    },
    {
      label: "Stop-Limit bei 2302.80 verkaufen",
      icon: (
        <Svg w={22} h={26} box="0 -3 24 28">
          <g transform="translate(0 3)">{arrowDown}</g>
          <path d="M3 -1h18M3 23h18" />
        </Svg>
      ),
    },
  ],
  [
    { label: "Preisalarm für folgenden Bid setzen ≤ 2302.80", icon: <Bell /> },
    { label: "Preisalarm für folgenden Ask setzen ≤ 2302.80", icon: <Bell /> },
  ],
  [{ label: "Symbol", icon: <ChartFrame />, more: true }],
  [
    {
      label: "Chart abdocken",
      icon: (
        <Svg w={26} h={26} box="0 0 26 26">
          <path d="M14 4H3v19h19V12M10 16L23 2M17 2h6.500v6" />
        </Svg>
      ),
    },
    {
      label: "Chart duplizieren",
      icon: (
        <Svg w={28} h={22} box="0 0 28 22">
          <path d="M22 2H5v14h21V9M9 13l5-5 4 3 9-9M1 5v15h21" />
        </Svg>
      ),
    },
  ],
  [
    {
      label: "Vorlage",
      icon: (
        <Svg w={26} h={26} box="0 0 26 26">
          <path d="M19 3H2v14h7M5 13l5-5 4 3 9-9M24 7v5" />
          <circle cx="18" cy="19" r="3.500" />
          <path d="M18 12.500v3M18 22.500v3M11.500 19h3M21.500 19h3M13.500 14.500l2 2M20.500 21.500l2 2M13.500 23.500l2-2M20.500 16.500l2-2" />
        </Svg>
      ),
      more: true,
    },
    {
      label: "Chart-Typ",
      icon: (
        <Svg w={22} h={24} box="0 0 22 24">
          <path d="M3 8v14M19 1v14M11 1v22" />
          <rect x="1.500" y="11" width="3" height="8" fill="#1a1a1a" />
          <rect x="17.500" y="4" width="3" height="8" fill="#1a1a1a" />
          <rect x="9" y="5" width="4" height="13" fill="currentColor" />
        </Svg>
      ),
      more: true,
    },
    { label: "Periode", icon: <Period className="-mt-1 pb-1" />, more: true },
  ],
];

const menuGroupsLower: MenuItem[][] = [
  [
    {
      label: "Ansichtsoptionen",
      icon: (
        <Svg w={24} h={24}>
          <path d="M10 4h14M10 12h14M10 20h14M1 4l2 2 5-4M1 12l2 2 5-4M1 20l2 2 5-4" />
        </Svg>
      ),
      more: true,
      selected: true,
    },
  ],
  [
    {
      label: "Indikatoren",
      icon: (
        <Svg w={24} h={24} stroke={3}>
          <circle cx="12" cy="12" r="12" fill="#fff" stroke="none" />
          <path d="M17 6c-5-2-6 2-6 6v10M7 12h8" stroke="#1a1a1a" />
        </Svg>
      ),
      more: true,
    },
    {
      label: "Objekt-Manager",
      icon: (
        <Svg w={22} h={22} box="0 0 22 22">
          <path d="M11 2l9 5-9 5-9-5zM2 11l9 5 9-5M2 15l9 5 9-5" />
        </Svg>
      ),
      more: true,
    },
  ],
  [
    {
      label: "Farboptionen",
      icon: (
        <Svg w={24} h={24}>
          <path d="M12 3C5 7 0 11 1 17c2 4 7 6 14 4V4z" fill="currentColor" stroke="none" />
          <path d="M12 3c6-3 11 2 11 7 0 4-2 6-2 6v3c0 4-5 4-5 0v-5" />
        </Svg>
      ),
      more: true,
    },
    {
      label: "Hintergrundbild",
      icon: (
        <Svg w={24} h={24}>
          <rect x="1" y="1.500" width="22" height="21" />
          <circle cx="7" cy="8" r="2.500" fill="currentColor" stroke="none" />
          <path d="M1 19l5-3 4 3 6-6 7 6v4H1z" fill="currentColor" stroke="none" />
        </Svg>
      ),
    },
  ],
  [{ label: "Chartshot", icon: <Camera /> }],
];

function MenuRow({ item }: { item: MenuItem }) {
  return (
    <div className="flex h-[60px] items-center">
      <button
        type="button"
        className={`flex h-[51px] w-full items-center rounded-md pr-[9px] text-left ${item.selected ? "bg-[#363636]" : ""}`}
      >
        <span className="mr-2 flex w-[34px] items-center justify-center">{item.icon}</span>
        {item.label}
        {item.more && <Triangle dir="right" className="ml-auto h-[9px]" />}
      </button>
    </div>
  );
}

function Separator() {
  return <hr className="my-1 h-1 border-0 bg-[#363636]" />;
}

function ContextMenu() {
  return (
    <div className="absolute top-[544px] left-[795px] w-[494px] rounded-md border-2 border-[#3f3f3f] bg-[#1a1a1a] px-[9px] pt-[3px] pb-16 text-[#f2f2f2] shadow-[0_4px_14px_rgba(0,0,0,0.7)]">
      {menuGroups.map((group, i) => (
        <div key={i}>
          {group.map((item) => (
            <MenuRow key={item.label} item={item} />
          ))}
          <Separator />
        </div>
      ))}
      <label className="flex h-[60px] items-center pr-[9px]">
        <span className="mr-2 flex w-[34px] items-center justify-center">
          <svg width={22} height={22} viewBox="0 0 22 22" aria-hidden="true">
            <circle cx="13" cy="9" r="8.500" fill="#fff" />
            <path d="M13 5v8M9 9h8" stroke="#1a1a1a" strokeWidth={2} />
            <path d="M8 14l-7 7" stroke="#fff" strokeWidth={4} />
          </svg>
        </span>
        Vergrößern
        <input
          type="range"
          min={70}
          max={160}
          defaultValue={80}
          className="ml-auto h-[2px] w-[157px] appearance-none bg-linear-to-r from-[#1eb233] from-15% to-[#525252] to-15% [&::-webkit-slider-thumb]:h-[18px] [&::-webkit-slider-thumb]:w-[18px] [&::-webkit-slider-thumb]:appearance-none [&::-webkit-slider-thumb]:rounded-full [&::-webkit-slider-thumb]:bg-[#bababa]"
        />
        <span className="w-[79px] text-right">80 %</span>
      </label>
      <Separator />
      {menuGroupsLower.map((group, i) => (
        <div key={i}>
          {group.map((item) => (
            <MenuRow key={item.label} item={item} />
          ))}
          <Separator />
        </div>
      ))}
    </div>
  );
}

const viewOptions: { label: string; shortcut?: string; off?: boolean }[] = [
  { label: "Positionen" },
  { label: "Ordern" },
  { label: "Bid-Preis Linie", shortcut: "B" },
  { label: "Ask-Preis Linie", shortcut: "K" },
  { label: "Raster", shortcut: "G" },
  { label: "Zeitraum-Unterteiler" },
  { label: "Tick-Volumen" },
  { label: "Deal-Auflistung", off: true },
  { label: "Chart-Skala" },
  { label: "Preis-Achse Overlay Butt..." },
  { label: "Preisalarme" },
  { label: "Quick Trade buttons" },
  { label: "Marktstimmung" },
  { label: "Titel der Indikatoren" },
];

function ViewMenu() {
  const key = "flex h-[36px] items-center justify-center rounded-lg border-2 border-[#2e2e2e] font-[inherit]";
  return (
    <div className="absolute top-[599px] left-[1290px] grid h-[845px] w-[417px] auto-rows-fr rounded-md border-2 border-[#4d4d4d] bg-[#1a1a1a] py-1 pr-4 pl-[17px] text-[#f2f2f2] shadow-[0_4px_14px_rgba(0,0,0,0.7)]">
      {viewOptions.map((option) => (
        <button type="button" key={option.label} className="flex items-center text-left">
          <span className="w-[34px]">
            {!option.off && (
              <Svg w={15} h={14} box="0 0 15 14" stroke={4}>
                <path d="M1 6l5 4 8-8" />
              </Svg>
            )}
          </span>
          {option.label}
          {option.shortcut && (
            <span className="ml-auto flex items-center text-[#b8b8b8]">
              <kbd className={`${key} w-[43px]`}>Ctrl</kbd>
              <span className="w-[21px] text-center">+</span>
              <kbd className={`${key} w-[33px]`}>{option.shortcut}</kbd>
            </span>
          )}
        </button>
      ))}
      <div className="absolute top-[322px] left-[260px] flex h-[42px] w-[42px] items-center justify-center rounded-md border border-[#363636] bg-[#2a2a2a]">
        <Svg w={24} h={24}>
          <circle cx="12" cy="12" r="10" />
          <path d="M5 19L19 5" />
        </Svg>
      </div>
    </div>
  );
}

/* ---------- page ---------- */

export default function App() {
  return (
    <div className="relative flex h-screen overflow-hidden bg-[#282828] font-['Liberation_Sans',Arial,sans-serif] text-[19px] leading-[22px] text-white">
      <Sidebar />
      <main className="mx-[9px] flex min-w-0 flex-1 flex-col">
        <div className="flex min-h-0 flex-1 gap-[10px]">
          <ChartArea />
          <ToolBar />
        </div>
        <Positions />
      </main>
      <div className="absolute top-[908px] right-[675px] flex flex-col items-center gap-2 text-[#808080]">
        <Svg w={6} h={9} box="0 0 6 9">
          <path d="M1 0v9M5 0v9" />
        </Svg>
        <Triangle dir="right" className="w-[6px]" />
        <Svg w={6} h={9} box="0 0 6 9">
          <path d="M1 0v9M5 0v9" />
        </Svg>
      </div>
      <RightPanel />
      <ContextMenu />
      <ViewMenu />
    </div>
  );
}
